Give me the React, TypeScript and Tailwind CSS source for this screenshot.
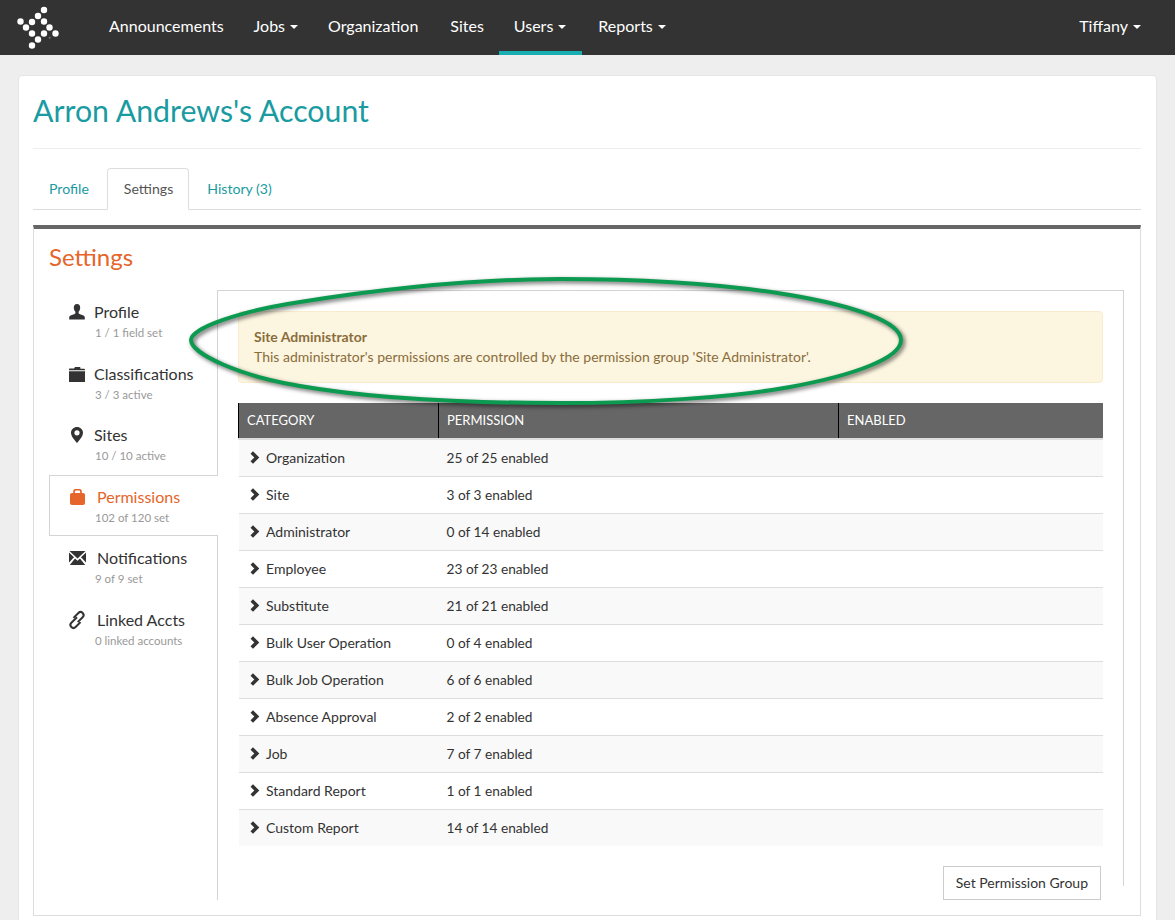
const navItems = [
  { label: 'Announcements', pad: 'px-[15px]' },
  { label: 'Jobs', caret: true, pad: 'px-[15px]' },
  { label: 'Organization', pad: 'pl-[15px] pr-[17px]' },
  { label: 'Sites', pad: 'px-[15px]' },
  { label: 'Users', caret: true, active: true, pad: 'pl-[15px] pr-4' },
  { label: 'Reports', caret: true, pad: 'pl-4 pr-[15px]' },
];

const logoDots = [
  [44, 10], [38, 16], [32, 22], [20.5, 21.5], [26, 27.5], [32, 33.5],
  [38, 39.5], [32, 45.5], [44, 33.5], [55.5, 33.5], [49.5, 27.5], [44, 21.5],
];

const rows = [
  ['Organization', '25 of 25 enabled'],
  ['Site', '3 of 3 enabled'],
  ['Administrator', '0 of 14 enabled'],
  ['Employee', '23 of 23 enabled'],
  ['Substitute', '21 of 21 enabled'],
  ['Bulk User Operation', '0 of 4 enabled'],
  ['Bulk Job Operation', '6 of 6 enabled'],
  ['Absence Approval', '2 of 2 enabled'],
  ['Job', '7 of 7 enabled'],
  ['Standard Report', '1 of 1 enabled'],
  ['Custom Report', '14 of 14 enabled'],
];

function Caret() {
  return <span className="ml-[5px] inline-block h-0 w-0 border-x-4 border-t-4 border-x-transparent border-t-white align-middle" />;
}

function Chevron() {
  return (
    <svg viewBox="0 0 10 13" className="ml-[3px] mr-[6.500px] h-[13px] w-[10px] shrink-0" fill="#333333">
      <path d="M.5 2.700 3 .2 9.300 6.500 3 12.800 .5 10.300 4.300 6.500z" />
    </svg>
  );
}

function UserIcon() {
  return (
    <svg viewBox="0 0 16 16" className="h-4 w-4" fill="currentColor">
      <path d="M8 0C5.800 0 4.800 1.600 4.800 3.600c0 1.700.7 3.300 1.600 4.200v1.100c0 .6-.9 1-2.200 1.500C2.500 11 .2 11.800.2 13.200V15.500h15.600v-2.300c0-1.400-2.300-2.200-4-2.800-1.300-.5-2.200-.9-2.200-1.500V7.800c.9-.9 1.600-2.500 1.600-4.200C11.200 1.600 10.200 0 8 0z" />
    </svg>
  );
}

function FolderIcon() {
  return (
    <svg viewBox="0 0 16 15" className="h-[15px] w-4" fill="currentColor">
      <path d="M0 3.200V2q0-.6.6-.6H5L6 0h4.800q.6 0 .6.6v1.100H15q1 0 1 1V3.200z" />
      <path d="M0 4.200h16v10.200q0 .6-.6.6H.6q-.6 0-.6-.6z" />
    </svg>
  );
}

function MarkerIcon() {
  return (
    <svg viewBox="0 0 12 16" className="h-4 w-3" fill="currentColor">
      <path fillRule="evenodd" d="M6 0C2.700 0 0 2.500 0 5.800 0 9.400 3.800 13.600 6 16c2.200-2.400 6-6.600 6-10.200C12 2.500 9.300 0 6 0zm0 3.200a2.600 2.600 0 1 1 0 5.200 2.600 2.600 0 0 1 0-5.200z" />
    </svg>
  );
}

function LockIcon() {
  return (
    <svg viewBox="0 0 15 16" className="h-4 w-[15px]" fill="currentColor">
      <path fillRule="evenodd" d="M3.200 4V2.200C3.200.9 4.100 0 5.400 0h4.200c1.300 0 2.200.9 2.200 2.200V4H13c1.200 0 2 .8 2 2v8c0 1.200-.8 2-2 2H2c-1.200 0-2-.8-2-2V6c0-1.200.8-2 2-2zM4.900 4h5.200V2.400c0-.5-.3-.8-.8-.8H5.700c-.5 0-.8.3-.8.8z" />
    </svg>
  );
}

function EnvelopeIcon() {
  return (
    <svg viewBox="0 0 17 14" className="h-[14px] w-[17px] shrink-0" fill="currentColor">
      <path d="M.5 0h16L8.500 7.500z" />
      <path d="M0 1.500 5 6.300 0 11.500z" />
      <path d="M17 1.500 12 6.300l5 5.200z" />
      <path d="M.8 14 6 7.500l2.500 2.300L11 7.500l5.200 6.500z" />
    </svg>
  );
}

function LinkIcon() {
  return (
    <svg viewBox="0 0 16 16" className="h-4 w-4 overflow-visible" fill="none" stroke="currentColor" strokeWidth="2">
      <g transform="rotate(-45 8 8)">
        <path d="M9 12H2a3 3 0 0 1 0-6h8" />
        <path d="M7 10h7a3 3 0 0 0 0-6H7" />
      </g>
    </svg>
  );
}

const sideItems = [
  { label: 'Profile', sub: '1 / 1 field set', icon: <UserIcon />, gap: 'ml-[9px]', height: 'h-[62px]' },
  { label: 'Classifications', sub: '3 / 3 active', icon: <FolderIcon />, gap: 'ml-[9px]', height: 'h-[61px]' },
  { label: 'Sites', sub: '10 / 10 active', icon: <MarkerIcon />, gap: 'ml-[9px]', height: 'h-[62px]' },
  { label: 'Permissions', sub: '102 of 120 set', icon: <LockIcon />, gap: 'ml-[12px]', height: 'h-[61px]', active: true },
  { label: 'Notifications', sub: '9 of 9 set', icon: <EnvelopeIcon />, gap: 'ml-[12px]', height: 'h-[62px]' },
  { label: 'Linked Accts', sub: '0 linked accounts', icon: <LinkIcon />, gap: 'ml-[12px]', height: 'h-[61px]' },
];

export default function App() {
  return (
    <div className="h-[920px] overflow-hidden bg-[#eeeeee] font-['Lato',sans-serif] text-sm text-[#333333]">
      <nav className="flex h-[55px] items-stretch bg-[#333333] text-[16px] text-white">
        <svg viewBox="0 0 78 55" className="h-[55px] w-[78px] shrink-0" fill="#ffffff">
          {logoDots.map(([cx, cy]) => (
            <circle key={`${cx}-${cy}`} cx={cx} cy={cy} r="3.200" />
          ))}
          <circle cx="49.700" cy="37.700" r="1" fill="#777777" />
        </svg>
        <div className="ml-4 flex">
          {navItems.map((item) => (
            <a
              key={item.label}
              className={`flex items-center border-b-4 border-t-2 border-t-transparent ${item.pad} ${item.active ? 'border-b-[#18adb0]' : 'border-b-transparent'}`}
            >
              {item.label}
              {item.caret && <Caret />}
            </a>
          ))}
        </div>
        <a className="ml-auto mr-[34px] flex items-center border-b-4 border-t-2 border-y-transparent">
          Tiffany
          <Caret />
        </a>
      </nav>

      <main className="mx-[18px] mt-5 h-[900px] rounded-t border border-[#e5e5e5] bg-white pl-[14px] pr-[15px]">
        <h1 className="mt-[18px] h-[54px] text-[30.300px] leading-[33px] text-[#1a9ba1]">Arron Andrews's Account</h1>
        <div className="border-t border-[#eeeeee]" />

        <div className="mt-[19px] flex h-[42px] border-b border-[#dddddd] pl-[1px] text-[14.100px]">
          <a className="pl-[15px] pr-[18px] pt-[11px] text-[#1a9ba1]">Profile</a>
          <a className="-mb-px rounded-t border border-b-white border-[#dddddd] bg-white pl-4 pr-[15px] pt-[10px] text-[#555555]">Settings</a>
          <a className="pl-[18px] pt-[11px] text-[#1a9ba1]">History (3)</a>
        </div>

        <section className="relative mt-[15px] h-[691px] border-x border-b border-t-4 border-x-[#dddddd] border-b-[#dddddd] border-t-[#666666]">
          <h2 className="ml-[15px] mt-[14px] h-[47px] text-[24px] leading-[28px] text-[#e5652a]">Settings</h2>

          <div className="flex items-start">
            <aside className="ml-[15px] h-[610px] w-[169px] shrink-0 border-r border-[#d4d4d4]">
              {sideItems.map((item) => (
                <div
                  key={item.label}
                  className={`${item.height} ${item.active ? '-mr-px border-y border-l border-[#d4d4d4] bg-white pl-[19px] pt-[10px]' : 'pl-[20px] pt-[11px]'}`}
                >
                  <div className={`flex h-[22px] items-center text-[16px] ${item.active ? 'text-[#e5652a]' : 'text-[#333333]'}`}>
                    <span className="flex w-[16px] justify-center">{item.icon}</span>
                    <span className={item.gap}>{item.label}</span>
                  </div>
                  <div className="ml-[26px] mt-px whitespace-nowrap text-[11.500px] leading-[18px] text-[#999999]">{item.sub}</div>
                </div>
              ))}
            </aside>

            <div className="h-[596px] flex-1 border-r border-t border-[#d4d4d4] pl-5 pr-5 pt-5">
              <div className="h-[72px] rounded border border-[#faebcc] bg-[#fcf5e0] px-[15px] pt-[15px] text-[14px] leading-[20px] text-[#8a6d3b]">
                <div className="font-bold">Site Administrator</div>
                <div>This administrator's permissions are controlled by the permission group 'Site Administrator'.</div>
              </div>

              <table className="mt-5 w-full table-fixed border-collapse text-[14px]">
                <thead>
                  <tr className="h-[36px] bg-[#666666] text-left text-[13px] text-white">
                    <th className="w-[200px] border-l border-black pl-2 font-normal">CATEGORY</th>
                    <th className="w-[400px] border-l border-black pl-2 font-normal">PERMISSION</th>
                    <th className="border-l border-black pl-2 font-normal">ENABLED</th>
                  </tr>
                </thead>
                <tbody>
                  {rows.map(([category, permission], i) => (
                    <tr key={category} className={`h-[37px] ${i === 0 ? 'border-t-2' : 'border-t'} border-[#dddddd] ${i % 2 === 0 ? 'bg-[#f9f9f9]' : 'bg-white'}`}>
                      <td className="pl-2">
                        <span className="flex items-center">
                          <Chevron />
                          {category}
                        </span>
                      </td>
                      <td className="pl-2 text-[13.700px]">{permission}</td>
                      <td />
                    </tr>
                  ))}
                </tbody>
              </table>

              <div className="mt-5 flex justify-end pr-[2px]">
                <button className="h-[34px] border border-[#cccccc] bg-white px-3 text-[14px] text-[#333333]">Set Permission Group</button>
              </div>
            </div>
            <div className="w-4 shrink-0" />
          </div>

          <svg viewBox="184 275 730 140" className="pointer-events-none absolute left-[150px] top-[46px] h-[140px] w-[730px] overflow-visible drop-shadow-[2px_2px_2px_rgba(0,0,0,0.6)]" fill="none">
            <path
              d="M191 340 C191 328 240 311 300 302 C370 291 470 279 560 279 C650 279 730 285 790 295 C855 306 901 322 901 340 C901 358 855 375 790 387 C730 398 640 403 560 403 C470 403 380 400 300 386 C240 376 191 354 191 340 Z"
              stroke="#0b9a50"
              strokeWidth="4"
            />
          </svg>
        </section>
      </main>
    </div>
  );
}
